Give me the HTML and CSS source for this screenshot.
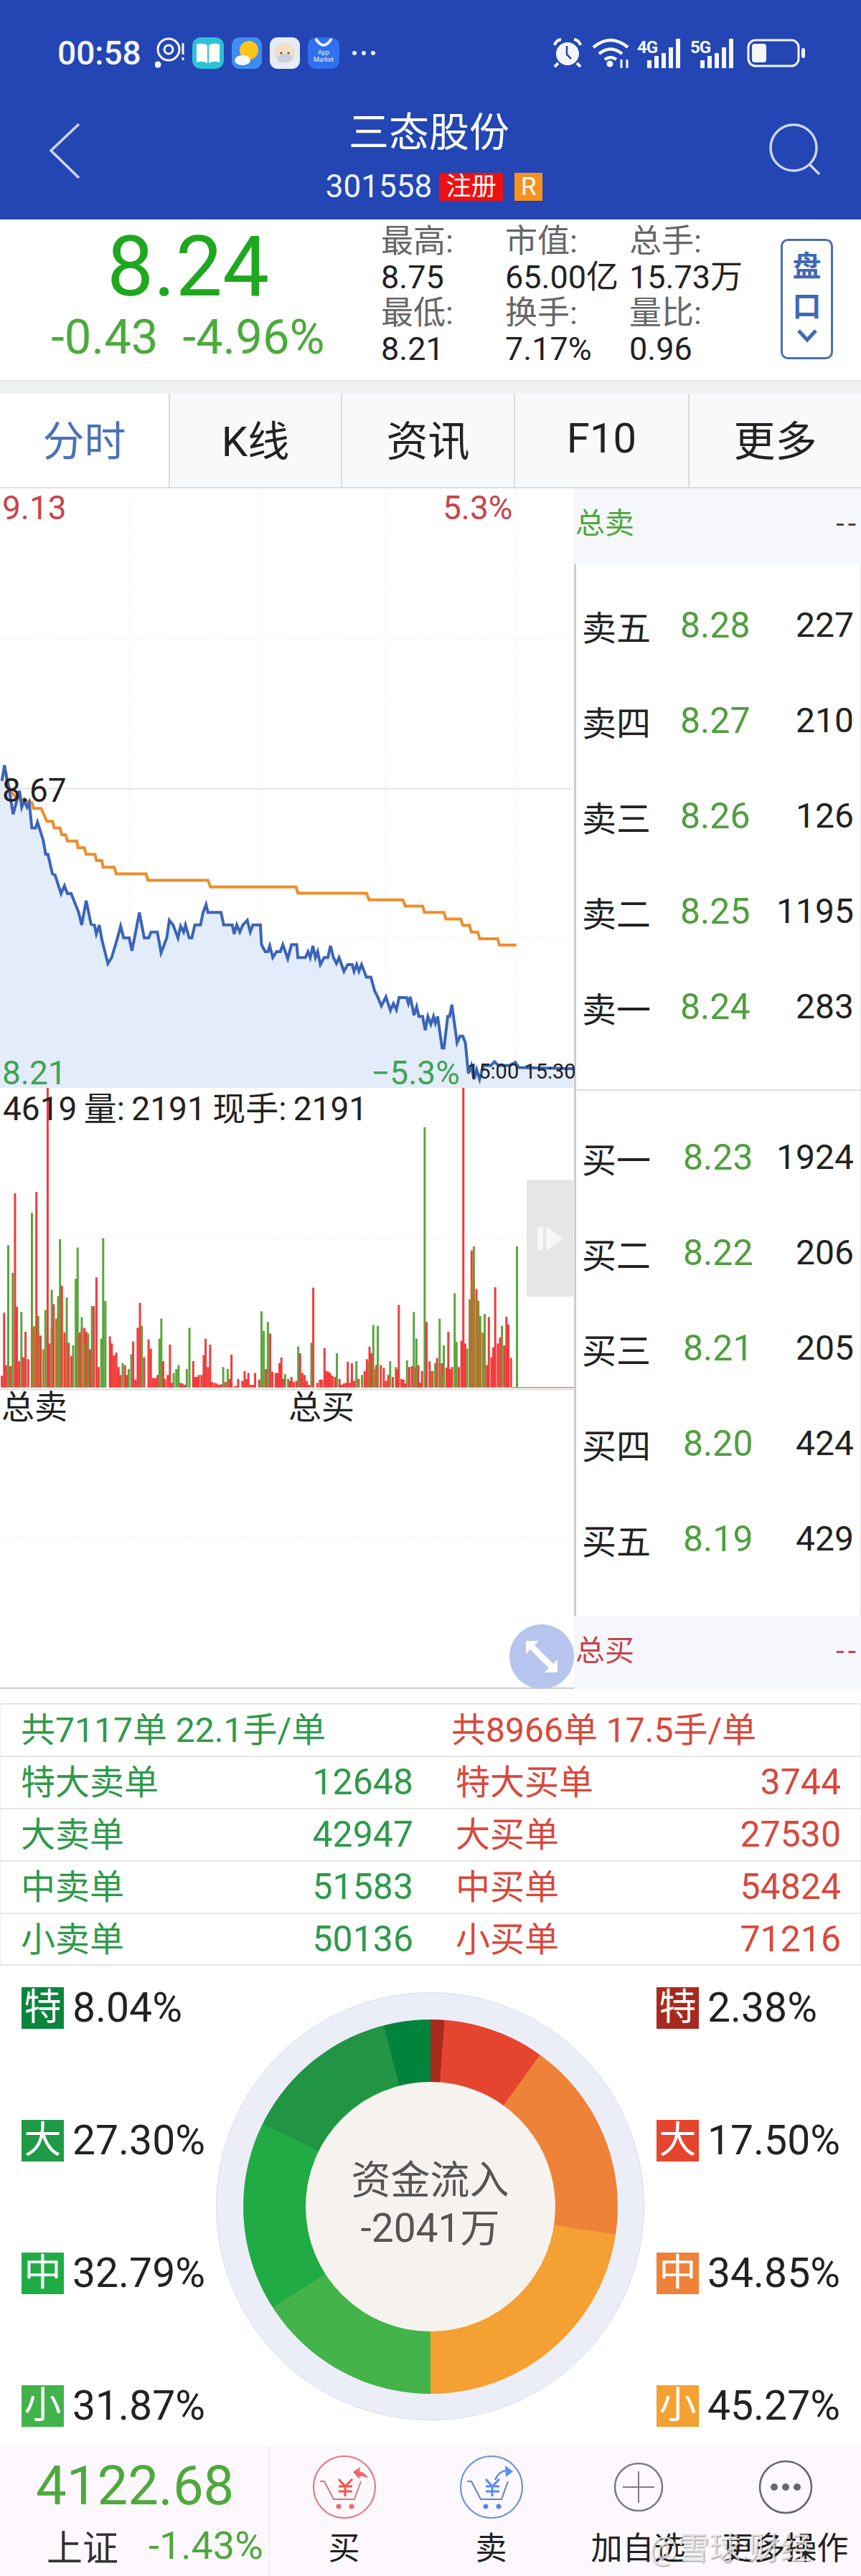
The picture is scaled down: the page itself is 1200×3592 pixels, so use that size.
FILE: index.html
```html
<!DOCTYPE html>
<html lang="zh-CN">
<head>
  <meta charset="UTF-8">
  <meta name="viewport" content="width=device-width, initial-scale=1.0">
  <title>三态股份</title>
  <link rel="stylesheet" href="styles.css">
</head>
<body>
  <header class="topbar">
    <div class="status">
      <span class="clock">00:58</span>
      <svg class="st-target" width="42" height="44" viewBox="0 0 42 44"><circle cx="19" cy="17" r="15" fill="none" stroke="#f3f6ff" stroke-width="3"/><circle cx="19" cy="17" r="6" fill="none" stroke="#f3f6ff" stroke-width="3"/><circle cx="4" cy="38" r="4.5" fill="#f3f6ff"/><path d="M39 8v16M39 28v4" stroke="#f3f6ff" stroke-width="3"/></svg>
      <svg class="st-app" width="44" height="44" viewBox="0 0 44 44"><rect width="44" height="44" rx="12" fill="#2cc3d8"/><path d="M6 10q8-3 15 1v25q-7-4-15-1zM38 10q-8-3-15 1v25q7-4 15-1z" fill="#fff"/></svg>
      <svg class="st-app" width="42" height="44" viewBox="0 0 42 44"><rect width="42" height="44" rx="11" fill="#3e8df0"/><circle cx="24" cy="18" r="13" fill="#ffc61a"/><ellipse cx="15" cy="32" rx="11" ry="7" fill="#f4f7ff"/></svg>
      <svg class="st-app" width="42" height="44" viewBox="0 0 42 44"><rect width="42" height="44" rx="11" fill="#e6ebf5"/><circle cx="21" cy="22" r="14" fill="#f2dfc4"/><ellipse cx="21" cy="29" rx="11" ry="6" fill="#c8cfe0"/><circle cx="16" cy="22" r="1.6" fill="#555"/><circle cx="26" cy="22" r="1.6" fill="#555"/></svg>
      <span class="st-market">
        <svg width="44" height="16" viewBox="0 0 44 16"><path d="M11 2q11 18 22 0" fill="none" stroke="#eef3ff" stroke-width="4"/></svg>
        <span>App<br>Market</span>
      </span>
      <span class="st-dots"><i></i><i></i><i></i></span>
      <span class="st-right">
        <svg width="44" height="42" viewBox="0 0 44 42"><circle cx="22" cy="22" r="16" fill="#f3f6ff"/><path d="M4 10q2-7 9-8M40 10q-2-7-9-8M9 35l-5 5M35 35l5 5" fill="none" stroke="#f3f6ff" stroke-width="4"/><path d="M21 11v12l6 6" fill="none" stroke="#2346b4" stroke-width="2.5"/></svg>
        <svg class="st-wifi" width="54" height="42" viewBox="0 0 54 42"><path d="M2 13q24-20 48 0M10 22q16-13 32 0M18 30q8-6 16 0" fill="none" stroke="#f3f6ff" stroke-width="4.5"/><circle cx="25" cy="36" r="4.5" fill="#f3f6ff"/><path d="M41 30v12M49 30v12" stroke="#f3f6ff" stroke-width="3"/></svg>
        <span class="st-net">
          <b>4G</b>
          <svg width="48" height="41" viewBox="0 0 48 41"><path d="M3 30v11M13 24v17M23 20v21M33 12v29M43 0v41" stroke="#f3f6ff" stroke-width="6"/></svg>
        </span>
        <span class="st-net">
          <b>5G</b>
          <svg width="48" height="41" viewBox="0 0 48 41"><path d="M3 30v11M13 24v17M23 20v21M33 12v29M43 0v41" stroke="#f3f6ff" stroke-width="6"/></svg>
        </span>
        <svg class="st-battery" width="82" height="40" viewBox="0 0 82 40"><rect x="2" y="2" width="70" height="36" rx="10" fill="none" stroke="#f3f6ff" stroke-width="3"/><rect x="7" y="7" width="20" height="26" rx="4" fill="#f3f6ff"/><rect x="76" y="13" width="5" height="14" rx="2.5" fill="#f3f6ff"/></svg>
      </span>
    </div>
    <div class="nav">
      <svg class="nav-back" width="44" height="79" viewBox="0 0 44 79"><path d="M41 2L2 39l39 38" fill="none" stroke="#cdd7ef" stroke-width="3.5"/></svg>
      <div class="nav-title">
        <h1>三态股份</h1>
        <p><span class="code">301558</span><span class="tag-red">注册</span><span class="tag-orange">R</span></p>
      </div>
      <svg class="nav-search" width="72" height="72" viewBox="0 0 72 72"><circle cx="34" cy="34" r="32" fill="none" stroke="#cdd7ef" stroke-width="3.5"/><path d="M57 58l13 13" stroke="#cdd7ef" stroke-width="3.5"/></svg>
    </div>
  </header>

  <section class="quote">
    <div class="price-box">
      <div class="price">8.24</div>
      <div class="change"><span>-0.43</span><span>-4.96%</span></div>
    </div>
    <div class="stats">
      <span class="st-label">最高:</span><span class="st-label">市值:</span><span class="st-label">总手:</span>
      <span>8.75</span><span>65.00亿</span><span>15.73万</span>
      <span class="st-label">最低:</span><span class="st-label">换手:</span><span class="st-label">量比:</span>
      <span>8.21</span><span>7.17%</span><span>0.96</span>
    </div>
    <div class="pankou">
      <span>盘</span><span>口</span>
      <svg width="30" height="20" viewBox="0 0 30 20"><path d="M3 3l12 13L27 3" fill="none" stroke="#3f69b5" stroke-width="5"/></svg>
    </div>
  </section>

  <nav class="tabs">
    <a class="tab active">分时</a>
    <a class="tab">K线</a>
    <a class="tab">资讯</a>
    <a class="tab">F10</a>
    <a class="tab">更多</a>
  </nav>

  <div class="main">
    <div class="charts">
      <div class="price-chart">
        <svg class="chart-svg" width="800" height="836" viewBox="0 0 1532 1527" preserveAspectRatio="none">
          <path class="grid-dot" d="M0 385H1530M0 1145H1530M345 0V1525M690 0V1525M1030 0V1525M1378 0V1525"/>
          <path class="grid-solid" d="M0 765H1530"/>
          <path class="price-fill" d="M0 1527V745L5 745L12 705L18 740L25 770L35 830L45 795L52 770L58 812L65 795L72 812L78 800L85 865L95 865L100 850L115 895L122 932L128 932L140 982L147 985L163 1032L172 1012L180 1032L190 1032L210 1080L218 1112L230 1050L243 1110L252 1112L257 1135L265 1112L272 1150L288 1210L298 1195L312 1150L322 1115L330 1145L345 1145L352 1178L360 1140L372 1080L385 1145L397 1145L403 1130L420 1130L430 1183L445 1145L452 1100L462 1112L475 1145L482 1115L490 1130L495 1112L505 1145L512 1145L520 1112L535 1112L542 1080L550 1060L555 1080L590 1080L597 1112L620 1112L625 1135L632 1112L640 1130L648 1112L660 1100L668 1130L675 1112L695 1112L698 1162L708 1180L715 1180L720 1165L728 1195L738 1180L748 1180L755 1162L768 1198L778 1162L792 1162L795 1195L815 1195L822 1180L828 1195L835 1165L842 1195L848 1180L855 1213L865 1195L875 1195L882 1165L890 1195L898 1210L905 1195L918 1230L928 1213L940 1213L945 1230L952 1213L958 1230L965 1213L978 1245L990 1245L1000 1280L1008 1295L1018 1318L1030 1295L1042 1330L1050 1312L1058 1328L1065 1297L1085 1297L1090 1312L1095 1295L1105 1342L1112 1320L1118 1345L1128 1345L1135 1380L1142 1345L1150 1365L1157 1345L1162 1362L1168 1345L1180 1425L1185 1425L1195 1345L1200 1345L1206 1315L1220 1412L1228 1395L1235 1395L1242 1412L1250 1490L1258 1470L1265 1505L1272 1480L1280 1505L1290 1470L1310 1470L1320 1460L1330 1470L1360 1470L1375 1462L1385 1475L1530 1478V1527Z"/>
          <path class="avg-line" d="M15 720L25 765L40 785L85 800L90 815L110 815L125 848L140 848L145 865L160 865L165 882L175 882L180 898L205 898L208 915L225 915L230 932L253 932L258 948L272 948L275 965L305 965L310 982L390 982L395 998L555 998L562 1015L790 1015L795 1031L978 1031L985 1048L1075 1048L1082 1064L1128 1064L1133 1080L1185 1080L1190 1097L1230 1097L1235 1113L1253 1113L1258 1130L1275 1130L1280 1147L1328 1147L1333 1163L1378 1163"/>
          <path class="price-line" d="M5 745L12 705L18 740L25 770L35 830L45 795L52 770L58 812L65 795L72 812L78 800L85 865L95 865L100 850L115 895L122 932L128 932L140 982L147 985L163 1032L172 1012L180 1032L190 1032L210 1080L218 1112L230 1050L243 1110L252 1112L257 1135L265 1112L272 1150L288 1210L298 1195L312 1150L322 1115L330 1145L345 1145L352 1178L360 1140L372 1080L385 1145L397 1145L403 1130L420 1130L430 1183L445 1145L452 1100L462 1112L475 1145L482 1115L490 1130L495 1112L505 1145L512 1145L520 1112L535 1112L542 1080L550 1060L555 1080L590 1080L597 1112L620 1112L625 1135L632 1112L640 1130L648 1112L660 1100L668 1130L675 1112L695 1112L698 1162L708 1180L715 1180L720 1165L728 1195L738 1180L748 1180L755 1162L768 1198L778 1162L792 1162L795 1195L815 1195L822 1180L828 1195L835 1165L842 1195L848 1180L855 1213L865 1195L875 1195L882 1165L890 1195L898 1210L905 1195L918 1230L928 1213L940 1213L945 1230L952 1213L958 1230L965 1213L978 1245L990 1245L1000 1280L1008 1295L1018 1318L1030 1295L1042 1330L1050 1312L1058 1328L1065 1297L1085 1297L1090 1312L1095 1295L1105 1342L1112 1320L1118 1345L1128 1345L1135 1380L1142 1345L1150 1365L1157 1345L1162 1362L1168 1345L1180 1425L1185 1425L1195 1345L1200 1345L1206 1315L1220 1412L1228 1395L1235 1395L1242 1412L1250 1490L1258 1470L1265 1505L1272 1480L1280 1505L1290 1470L1310 1470L1320 1460L1330 1470L1360 1470L1375 1462L1385 1475L1530 1478"/>
        </svg>
        <span class="lbl lbl-high up">9.13</span>
        <span class="lbl lbl-highpct up">5.3%</span>
        <span class="lbl lbl-mid">8.67</span>
        <span class="lbl lbl-low down">8.21</span>
        <span class="lbl lbl-lowpct down">−5.3%</span>
        <span class="lbl lbl-time">15:00 15:30</span>
      </div>
      <div class="vol-chart">
        <svg class="chart-svg" width="800" height="836" viewBox="0 30 1530 1525" preserveAspectRatio="none">
          <path class="grid-dot" d="M0 413H1530M0 1175H1530"/>
          <path class="vol-axis" d="M0 797H1530"/>
          <path class="vol-base" d="M1365 792H1530"/>
          <path class="vol-green" d="M22 792V430M34 792V500M57 792V600M85 792V348M102 792V610M121 792V595M138 792V543M155 792V560M160 792V415M178 792V563M195 792V685M202 792V515M207 792V436M218 792V613M235 792V655M245 792V585M270 792V668M275 792V412M281 792V572M327 792V730M343 792V745M350 792V707M378 792V635M425 792V668M430 792V617M463 792V755M470 792V745M476 792V735M498 792V745M505 792V640M595 792V740M607 792V745M697 792V598M703 792V648M714 792V625M760 792V758M768 792V770M795 792V688M830 792V678M898 792V705M950 792V725M965 792V760M995 792V633M1007 792V635M1040 792V725M1055 792V740M1085 792V723M1103 792V600M1110 792V668M1132 792V130M1172 792V617M1160 792V730M1183 792V685M1195 792V740M1212 792V552M1217 792V676M1245 792V693M1263 792V433M1280 792V610M1292 792V605M1338 792V635M1378 792V433"/>
          <path class="vol-red" d="M11 792V602M40 792V298M45 792V587M62 792V715M68 792V650M75 792V720M97 792V295M127 792V30M143 792V580M165 792V533M172 792V652M183 792V678M213 792V652M225 792V640M230 792V650M250 792V585M257 792V512M263 792V740M293 792V662M298 792V680M310 792V703M321 792V760M355 792V675M367 792V640M373 792V577M396 792V670M402 792V693M420 792V760M435 792V725M453 792V683M515 792V725M525 792V765M530 792V760M543 792V710M548 792V668M560 792V683M565 792V778M572 792V780M617 792V708M635 792V770M652 792V750M662 792V755M680 792V755M720 792V655M735 792V755M745 792V730M750 792V716M777 792V765M800 792V705M806 792V755M835 792V538M865 792V692M870 792V750M880 792V755M905 792V770M927 792V727M938 792V730M985 792V688M990 792V705M1015 792V735M1023 792V742M1063 792V582M1070 792V770M1125 792V750M1137 792V625M1145 792V725M1165 792V717M1178 792V730M1195 792V650M1205 792V740M1230 792V673M1235 792V30M1240 792V680M1257 792V443M1270 792V541M1303 792V613M1310 792V715M1320 792V537M1327 792V680M1350 792V612M1355 792V632M1362 792V717M5 792V762M16 792V735M28 792V738M51 792V725M108 792V660M132 792V680M190 792V712M240 792V695M304 792V710M316 792V740M333 792V735M338 792V760M361 792V772M384 792V715M408 792V768M414 792V768M440 792V770M447 792V760M458 792V780M481 792V780M487 792V782M493 792V785M520 792V765M537 792V760M554 792V740M578 792V782M584 792V785M590 792V784M601 792V778M612 792V770M623 792V790M629 792V788M646 792V775M657 792V770M668 792V785M674 792V785M691 792V772M709 792V745M726 792V752M740 792V755M755 792V770M772 792V775M783 792V778M790 792V775M812 792V760M818 792V775M824 792V785M846 792V780M853 792V772M858 792V772M875 792V752M886 792V762M893 792V765M910 792V785M916 792V782M922 792V780M933 792V780M944 792V775M956 792V770M972 792V750M978 792V720M1003 792V735M1029 792V775M1035 792V760M1047 792V765M1058 792V745M1076 792V772M1081 792V782M1091 792V740M1098 792V738M1115 792V735M1120 792V780M1153 792V750M1190 792V742M1200 792V745M1223 792V740M1298 792V735M1315 792V690M1333 792V665M1344 792V685"/>
          <path class="vol-mix" d="M85 792V640M91 792V636M102 792V650M115 792V695M138 792V640M150 792V617M160 792V555M178 792V680M207 792V655M218 792V640M226 792V680M983 792V725M1000 792V745M1007 792V745M1107 792V740M1150 792V750M1172 792V730M1178 792V760M1252 792V568M1258 792V520M1263 792V515M1270 792V570M1275 792V572M1280 792V650M1287 792V652"/>
        </svg>
        <span class="lbl lbl-volinfo">4619 量: 2191 现手: 2191</span>
        <span class="lbl lbl-sell">总卖</span>
        <span class="lbl lbl-buy">总买</span>
        <span class="play-tab">
          <svg width="36" height="34" viewBox="0 0 36 34"><path d="M0 1h8v32H0zM12 0l24 17-24 17z" fill="#f7f7f9"/></svg>
        </span>
        <span class="zoom-btn">
          <svg width="50" height="50" viewBox="0 0 50 50"><path d="M3 3h18L15 9l26 26 6-6v18H29l6-6L9 15l-6 6z" fill="#fff"/></svg>
        </span>
      </div>
    </div>

    <aside class="book">
      <div class="book-total"><span class="down">总卖</span><span class="dash">--</span></div>
      <div class="book-side">
        <div class="book-row"><span>卖五</span><b>8.28</b><span>227</span></div>
        <div class="book-row"><span>卖四</span><b>8.27</b><span>210</span></div>
        <div class="book-row"><span>卖三</span><b>8.26</b><span>126</span></div>
        <div class="book-row"><span>卖二</span><b>8.25</b><span>1195</span></div>
        <div class="book-row"><span>卖一</span><b>8.24</b><span>283</span></div>
      </div>
      <div class="book-side bids">
        <div class="book-row"><span>买一</span><b>8.23</b><span>1924</span></div>
        <div class="book-row"><span>买二</span><b>8.22</b><span>206</span></div>
        <div class="book-row"><span>买三</span><b>8.21</b><span>205</span></div>
        <div class="book-row"><span>买四</span><b>8.20</b><span>424</span></div>
        <div class="book-row"><span>买五</span><b>8.19</b><span>429</span></div>
      </div>
      <div class="book-total"><span class="up">总买</span><span class="dash up">--</span></div>
    </aside>
  </div>

  <section class="orders">
    <div class="order-row head"><div class="cell sell">共7117单 22.1手/单</div><div class="cell buy">共8966单 17.5手/单</div></div>
    <div class="order-row"><div class="cell sell"><span>特大卖单</span><span class="num">12648</span></div><div class="cell buy"><span>特大买单</span><span class="num">3744</span></div></div>
    <div class="order-row"><div class="cell sell"><span>大卖单</span><span class="num">42947</span></div><div class="cell buy"><span>大买单</span><span class="num">27530</span></div></div>
    <div class="order-row"><div class="cell sell"><span>中卖单</span><span class="num">51583</span></div><div class="cell buy"><span>中买单</span><span class="num">54824</span></div></div>
    <div class="order-row"><div class="cell sell"><span>小卖单</span><span class="num">50136</span></div><div class="cell buy"><span>小买单</span><span class="num">71216</span></div></div>
  </section>

  <section class="flow">
    <div class="flow-col">
      <div class="flow-item"><span class="badge g1">特</span>8.04%</div>
      <div class="flow-item"><span class="badge g2">大</span>27.30%</div>
      <div class="flow-item"><span class="badge g3">中</span>32.79%</div>
      <div class="flow-item"><span class="badge g4">小</span>31.87%</div>
    </div>
    <div class="ring">
      <div class="donut">
        <div class="hole">资金流入<br>-2041万</div>
      </div>
    </div>
    <div class="flow-col right">
      <div class="flow-item"><span class="badge r1">特</span>2.38%</div>
      <div class="flow-item"><span class="badge r2">大</span>17.50%</div>
      <div class="flow-item"><span class="badge r3">中</span>34.85%</div>
      <div class="flow-item"><span class="badge r4">小</span>45.27%</div>
    </div>
  </section>

  <footer class="bar">
    <div class="index">
      <div class="index-num">4122.68</div>
      <div class="index-sub"><span>上证</span><span class="index-pct">-1.43%</span></div>
    </div>
    <div class="actions">
      <div class="action">
        <svg width="90" height="88" viewBox="0 0 90 88"><circle cx="45" cy="44" r="43" fill="none" stroke="#e07f7e" stroke-width="2.2"/><path d="M11 36h6l13 25h29l9-25" fill="none" stroke="#c98078" stroke-width="2"/><path d="M37 33l9 10 10-10M37 43h19M37 50h19M46 43v14" fill="none" stroke="#f2564f" stroke-width="3"/><circle cx="37" cy="71" r="3.6" fill="#e2706c"/><circle cx="55" cy="71" r="3.6" fill="#e2706c"/><path d="M57 23l10-7-1 6q9 2 12 10-6-4-12-3v4z" fill="#f4686a"/></svg>
        <span>买</span>
      </div>
      <div class="action">
        <svg width="90" height="88" viewBox="0 0 90 88"><circle cx="45" cy="44" r="43" fill="none" stroke="#6c95da" stroke-width="2.2"/><path d="M11 36h6l13 25h29l9-25" fill="none" stroke="#5f83c4" stroke-width="2"/><path d="M37 33l9 10 10-10M37 43h19M37 50h19M46 43v14" fill="none" stroke="#5a8af0" stroke-width="3"/><circle cx="37" cy="71" r="3.6" fill="#5f86e0"/><circle cx="55" cy="71" r="3.6" fill="#5f86e0"/><path d="M50 34q5-12 16-13" fill="none" stroke="#5f8ee8" stroke-width="2.5"/><path d="M64 14l11 8-10 8z" fill="#5b8cf0"/></svg>
        <span>卖</span>
      </div>
      <div class="action">
        <svg width="90" height="88" viewBox="0 0 90 88"><circle cx="45" cy="44" r="33" fill="none" stroke="#7b7d84" stroke-width="2.6"/><path d="M23 44h44M45 22v44" stroke="#7b7d84" stroke-width="2"/></svg>
        <span>加自选</span>
      </div>
      <div class="action">
        <svg width="90" height="88" viewBox="0 0 90 88"><circle cx="45" cy="44" r="36" fill="none" stroke="#66686e" stroke-width="2.6"/><circle cx="29" cy="44" r="5" fill="#66686e"/><circle cx="45" cy="44" r="5" fill="#66686e"/><circle cx="61" cy="44" r="5" fill="#66686e"/></svg>
        <span>更多操作</span>
      </div>
    </div>
    <span class="watermark">@雪球:财经</span>
  </footer>
</body>
</html>
```

FILE: styles.css
```css
*{box-sizing:border-box;margin:0;padding:0}
body{width:1200px;background:#fff;color:#222;font-family:Roboto,"Noto Sans CJK SC",sans-serif}
svg{display:block;flex:none}
.up{color:#c9434a}
.down{color:#3fa552}

/* top */
.topbar{height:306px;background:#2346b4;color:#fff}
.status{display:flex;align-items:center;height:44px;padding-left:80px;position:relative;top:52px}
.clock{font-size:46px;font-weight:500;line-height:44px;width:136px;color:#f3f6ff}
.st-target{margin-right:10px}
.st-app{margin-right:11px}
.st-market{width:44px;height:44px;border-radius:12px;background:#2f6ff0;color:#eef3ff;font-size:9px;line-height:10px;text-align:center;overflow:hidden}
.st-dots{display:flex;gap:7px;margin-left:18px}
.st-dots i{width:6px;height:6px;border-radius:50%;background:#eef3ff}
.st-right{display:flex;align-items:center;margin-left:auto;padding-right:77px}
.st-wifi{margin-left:12px}
.st-net{position:relative;width:62px;height:41px;margin-left:12px;display:flex;justify-content:flex-end}
.st-wifi + .st-net{margin-left:9px}
.st-net b{position:absolute;left:0;top:1px;font-size:24px;line-height:22px;font-weight:700;letter-spacing:-1px;color:#f3f6ff}
.st-battery{margin-left:17px}
.nav{display:grid;grid-template-columns:1fr auto 1fr;align-items:start;padding:0 56px;margin-top:108px}
.nav-back{margin:19px 0 0 13px}
.nav-search{justify-self:end;margin-top:20px}
.nav-title{text-align:center}
.nav-title h1{font-size:56px;font-weight:400;line-height:66px;padding-right:4px}
.nav-title p{display:flex;align-items:center;margin-top:22px;height:40px;padding-left:10px}
.code{font-size:44px;margin-right:10px;color:#eef2ff}
.tag-red{width:89px;height:39px;background:#ee1111;font-size:35px;line-height:39px;text-align:center}
.tag-orange{width:39px;height:39px;margin-left:16px;background:#f7921e;font-size:35px;line-height:39px;text-align:center}

/* quote */
.quote{display:flex;height:225px;border-top:2px solid #fdfbf6;border-bottom:1px solid #dcdcdc}
.price-box{width:531px;padding:4px 7px 0 0;text-align:center}
.price{font-size:116px;line-height:120px;color:#1fa81f}
.change{display:flex;justify-content:center;gap:34px;margin-top:3px;font-size:67px;line-height:70px;color:#4caa3c}
.stats{width:557px;display:grid;grid-template-columns:173px 173px 1fr;grid-auto-rows:50px;padding-top:4px;font-size:45px;line-height:50px;white-space:nowrap}
.st-label{color:#666}
.pankou{width:73px;height:168px;margin-top:25px;border:3px solid #4a6fb0;border-radius:10px;display:flex;flex-direction:column;align-items:center;padding-top:8px;color:#3f69b5;font-size:40px;font-weight:700;line-height:56px}
.pankou svg{margin-top:2px}

/* tabs */
.tabs{display:grid;grid-template-columns:237px 240px 241px 243px 239px;height:150px;padding-top:18px;background:#f0f2f2}
.tab{display:flex;align-items:center;justify-content:center;background:#f8f9fb;border-right:2px solid #ddd;border-bottom:2px solid #ddd;font-size:58px;padding-bottom:6px}
.tab:last-child{border-right:0}
.tab.active{background:#fff;color:#4a72b8}

/* charts */
.main{display:flex;height:1674px}
.charts{width:800px;flex:none}
.price-chart{position:relative;height:836px}
.vol-chart{position:relative;height:838px;border-bottom:2px solid #ccc}
.chart-svg{position:absolute;left:0;top:0}
.chart-svg path{vector-effect:non-scaling-stroke;fill:none}
.grid-dot{stroke:#efefef;stroke-width:1.5;stroke-dasharray:2 4}
.grid-solid{stroke:#e6e6e6;stroke-width:2}
.chart-svg .price-fill{fill:#e3ecfb}
.avg-line{stroke:#f08c2a;stroke-width:4}
.price-line{stroke:#3a65b8;stroke-width:4}
.vol-axis{stroke:#ddd;stroke-width:2}
.vol-base{stroke:#c9434a;stroke-width:1}
.vol-green{stroke:#5aa63c;stroke-width:3}
.vol-red{stroke:#f03c3c;stroke-width:3}
.vol-mix{stroke:#a87a30;stroke-width:3}
.lbl{position:absolute;font-size:46px;line-height:50px;white-space:nowrap}
.lbl-high{left:3px;top:2px}
.lbl-highpct{left:617px;top:2px}
.lbl-mid{left:3px;top:396px}
.lbl-low{left:3px;top:790px}
.lbl-lowpct{left:517px;top:790px}
.lbl-time{left:651px;top:795px;font-size:29px;line-height:36px}
.lbl-volinfo{left:4px;top:4px;word-spacing:-2px}
.lbl-sell{left:2px;top:420px}
.lbl-buy{left:402px;top:420px}
.play-tab{position:absolute;left:734px;top:128px;width:65px;height:163px;background:#e6e6e8;display:flex;align-items:center;justify-content:center}
.zoom-btn{position:absolute;left:710px;top:748px;width:90px;height:90px;border-radius:50%;background:#b5c5ee;display:flex;align-items:center;justify-content:center}

/* order book */
.book{width:400px;flex:none;display:flex;flex-direction:column}
.book-total{display:flex;justify-content:space-between;height:106px;padding:22px 2px 0;background:#f6f7fc;font-size:41px;line-height:54px}
.book-total:last-child{height:102px}
.book-total .down{color:#4fa83c}
.dash{letter-spacing:5px;color:#444}
.dash.up{color:#c9434a}
.book-side{height:734px;padding-top:18px;border-left:3px solid #ccc;border-right:2px solid #eee;border-bottom:2px solid #ddd}
.book-side.bids{height:732px;padding-top:26px;border-bottom:0}
.book-row{display:grid;grid-template-columns:137px 100px 1fr;height:133px;align-items:center;padding:0 8px 0 8px;font-size:48px;white-space:nowrap}
.book-row b{font-weight:400;font-size:50px;color:#4f9f3e}
.book-row span:last-child{text-align:right}
.bids .book-row b{padding-left:4px}

/* orders */
.orders{margin-top:20px;border-left:1px solid #eee;border-right:1px solid #eee}
.order-row{display:grid;grid-template-columns:600px 1fr;height:73px;border-top:2px solid #e6e6e6;font-size:48px;line-height:71px;white-space:nowrap}
.order-row:last-child{border-bottom:2px solid #e6e6e6;height:74px}
.cell{display:flex;justify-content:space-between}
.num{font-size:50px}
.sell{padding:0 25px 0 28px;color:#2e9a4a}
.buy{padding:0 27px 0 34px;color:#d9483b}
.head .buy{padding-left:28px}

/* fund flow */
.flow{display:grid;grid-template-columns:271px 597px 1fr;height:671px;padding:30px 0 0 30px}
.flow-col{display:flex;flex-direction:column;gap:127px}
.flow-col.right{margin-left:17px}
.flow-item{display:flex;align-items:center;height:58px;font-size:57px;line-height:66px;white-space:nowrap}
.badge{width:59px;height:58px;margin-right:12px;color:#fff;font-size:52px;line-height:58px;text-align:center;flex:none}
.g1{background:#0a853c}
.g2{background:#1f9a47}
.g3{background:#1fac45}
.g4{background:#42b24b}
.r1{background:#a82a1e}
.r2{background:#e5452e}
.r3{background:#ee8238}
.r4{background:#f5a033}
.ring{width:597px;height:597px;margin-top:7px;border-radius:50%;background:#eceef7;border:1px solid #d8dcec;display:flex;align-items:center;justify-content:center}
.donut{width:522px;height:522px;border-radius:50%;display:flex;align-items:center;justify-content:center;background:conic-gradient(#a82a1e 0 4.28deg,#e5452e 4.28deg 35.78deg,#ee8238 35.78deg 98.5deg,#f5a033 98.5deg 180deg,#43b34a 180deg 237.4deg,#20ab44 237.4deg 296.4deg,#229544 296.4deg 345.53deg,#00843d 345.53deg 360deg)}
.hole{width:348px;height:348px;border-radius:50%;background:#f6f3ee;color:#555;font-size:55px;line-height:67px;text-align:center;padding-top:104px}

/* bottom */
.bar{position:relative;display:flex;height:182px;background:#fcf8fd}
.index{width:376px;flex:none;border-right:1px solid #ece8ee;padding:12px 0 0 50px;white-space:nowrap}
.index-num{font-size:76px;line-height:84px;color:#4fa83c}
.index-sub{display:flex;align-items:center;height:60px;margin-top:11px;padding-left:15px;font-size:50px;color:#333}
.index-pct{margin-left:42px;font-size:54px;color:#4fa83c}
.actions{display:grid;grid-template-columns:repeat(4,205px);padding:12px 0 0 1px}
.action{display:flex;flex-direction:column;align-items:center;font-size:44px;line-height:60px;white-space:nowrap}
.action span{margin-top:12px}
.watermark{position:absolute;left:905px;top:112px;font-size:44px;line-height:60px;color:rgba(255,255,255,.72);text-shadow:1px 1px 2px rgba(0,0,0,.45);white-space:nowrap}
```
